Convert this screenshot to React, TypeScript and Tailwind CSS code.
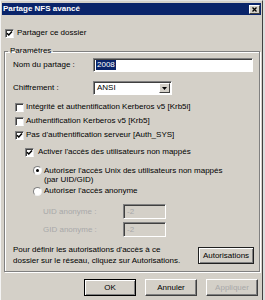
import React from "react";

function Check({ checked }: { checked?: boolean }) {
  return (
    <span className="w-[9px] h-[9px] shrink-0 bg-white border border-t-[#808080] border-l-[#808080] border-b-white border-r-[#e8e8e8] shadow-[inset_1px_1px_0_#404040] flex items-center justify-center">
      {checked && (
        <svg width="7" height="7" viewBox="0 0 7 7">
          <path d="M1 3.2 L2.8 5 L6 1.5" stroke="#000" strokeWidth="1.5" fill="none" />
        </svg>
      )}
    </span>
  );
}

function Radio({ checked }: { checked?: boolean }) {
  return (
    <span className="w-[9px] h-[9px] shrink-0 rounded-full bg-white border border-t-[#808080] border-l-[#808080] border-b-[#f0f0f0] border-r-[#f0f0f0] flex items-center justify-center">
      {checked && <span className="w-[3px] h-[3px] rounded-full bg-black" />}
    </span>
  );
}

function Button({ label, primary, disabled }: { label: string; primary?: boolean; disabled?: boolean }) {
  return (
    <button
      className={
        primary
          ? "w-[52px] h-[17px] bg-[#d4d0c8] border border-black shadow-[inset_1px_1px_0_#fff,inset_-1px_-1px_0_#808080] flex items-center justify-center"
          : disabled
          ? "w-[52px] h-[17px] bg-[#d4d0c8] border border-t-white border-l-white border-r-[#404040] border-b-[#404040] shadow-[inset_-1px_-1px_0_#808080] flex items-center justify-center text-[#a8a8a8]"
          : "w-[52px] h-[17px] bg-[#d4d0c8] border border-t-white border-l-white border-r-[#404040] border-b-[#404040] shadow-[inset_-1px_-1px_0_#808080] flex items-center justify-center"
      }
    >
      {label}
    </button>
  );
}

export default function App() {
  return (
    <div className="w-[265px] h-[300px] bg-[#dcdcdc] overflow-hidden font-['Liberation_Sans',Arial,sans-serif] text-[8px] leading-[10px] text-black">
      <div className="w-[263px] h-[300px] bg-[#d4d0c8] border-l border-t border-l-[#f4f4f4] border-t-[#e4e4e4] border-r border-r-[#404040] pt-[2px] px-[1px] flex flex-col">
        {/* Title bar */}
        <div className="h-[12px] bg-[#0a246a] flex items-center justify-between pl-[1px] pr-[1px]">
          <span className="font-bold text-white">Partage NFS avancé</span>
          <span className="w-[11px] h-[9px] bg-[#d4d0c8] border border-t-white border-l-white border-r-[#404040] border-b-[#404040] flex items-center justify-center">
            <svg width="5" height="5" viewBox="0 0 5 5">
              <path d="M0.5 0.5 L4.5 4.5 M4.5 0.5 L0.5 4.5" stroke="#000" strokeWidth="1.3" />
            </svg>
          </span>
        </div>

        <div className="mt-[13px] ml-[3px] h-[10px] flex items-center gap-[3px]">
          <Check checked />
          <span>Partager ce dossier</span>
        </div>

        {/* Paramètres group */}
        <fieldset className="mt-[8px] ml-[2px] w-[256px] border border-[#808080] shadow-[1px_1px_0_#fff,inset_1px_1px_0_#fff] pt-[2px] pb-[5px]">
          <legend className="ml-[3px] px-[2px]">Paramètres</legend>

          <div className="h-[14px] flex items-center pl-[8px]">
            <span className="w-[80px]">Nom du partage :</span>
            <div className="w-[160px] h-[14px] bg-white border border-t-[#808080] border-l-[#808080] border-b-white border-r-white shadow-[inset_1px_1px_0_#404040] flex items-center pl-[2px]">
              <span className="bg-[#0a246a] text-white px-[1px]">2008</span>
            </div>
          </div>

          <div className="mt-[9px] h-[14px] flex items-center pl-[8px]">
            <span className="w-[80px]">Chiffrement :</span>
            <div className="w-[79px] h-[14px] bg-white border border-t-[#808080] border-l-[#808080] border-b-white border-r-white shadow-[inset_1px_1px_0_#404040] flex items-center justify-between pl-[3px] pr-[1px]">
              <span>ANSI</span>
              <span className="w-[11px] h-[10px] bg-[#d4d0c8] border border-t-white border-l-white border-r-[#404040] border-b-[#404040] flex items-center justify-center">
                <svg width="5" height="3" viewBox="0 0 5 3">
                  <path d="M0 0 H5 L2.5 3 Z" fill="#000" />
                </svg>
              </span>
            </div>
          </div>

          <div className="mt-[5px] flex flex-col">
            <div className="h-[14px] flex items-center gap-[2px] ml-[10px]">
              <Check />
              <span>Intégrité et authentification Kerberos v5 [Krb5i]</span>
            </div>
            <div className="h-[14px] flex items-center gap-[2px] ml-[10px]">
              <Check />
              <span>Authentification Kerberos v5 [Krb5]</span>
            </div>
            <div className="h-[14px] flex items-center gap-[2px] ml-[10px]">
              <Check checked />
              <span>Pas d'authentification serveur [Auth_SYS]</span>
            </div>
            <div className="mt-[3px] h-[14px] flex items-center gap-[4px] ml-[20px]">
              <Check checked />
              <span>Activer l'accès des utilisateurs non mappés</span>
            </div>
          </div>

          <div className="mt-[7px] ml-[28px] flex items-start gap-[2px] leading-[9px]">
            <Radio checked />
            <span>
              Autoriser l'accès Unix des utilisateurs non mappés
              <br />
              (par UID/GID)
            </span>
          </div>
          <div className="mt-[2px] ml-[28px] h-[10px] flex items-center gap-[2px]">
            <Radio />
            <span>Autoriser l'accès anonyme</span>
          </div>

          <div className="mt-[8px] ml-[38px] h-[15px] flex items-center">
            <span className="w-[80px] text-[#a8a8a8]">UID anonyme :</span>
            <div className="w-[43px] h-[15px] bg-[#d4d0c8] border border-t-[#808080] border-l-[#808080] border-b-white border-r-white shadow-[inset_1px_1px_0_#404040] flex items-center pl-[3px] text-[#a8a8a8]">
              -2
            </div>
          </div>
          <div className="mt-[3px] ml-[38px] h-[15px] flex items-center">
            <span className="w-[80px] text-[#a8a8a8]">GID anonyme :</span>
            <div className="w-[43px] h-[15px] bg-[#d4d0c8] border border-t-[#808080] border-l-[#808080] border-b-white border-r-white shadow-[inset_1px_1px_0_#404040] flex items-center pl-[3px] text-[#a8a8a8]">
              -2
            </div>
          </div>

          <div className="mt-[7px] flex items-center justify-between pl-[8px] pr-[5px] leading-[11px]">
            <span>
              Pour définir les autorisations d'accès à ce
              <br />
              dossier sur le réseau, cliquez sur Autorisations.
            </span>
            <button className="w-[56px] h-[17px] bg-[#d4d0c8] border border-[#202020] shadow-[inset_1px_1px_0_#fff,inset_-1px_-1px_0_#808080] flex items-center justify-center">
              Autorisations
            </button>
          </div>
        </fieldset>

        <div className="mt-[7px] mr-[3px] flex justify-end gap-[9px]">
          <Button label="OK" primary />
          <Button label="Annuler" />
          <Button label="Appliquer" disabled />
        </div>
      </div>
    </div>
  );
}
